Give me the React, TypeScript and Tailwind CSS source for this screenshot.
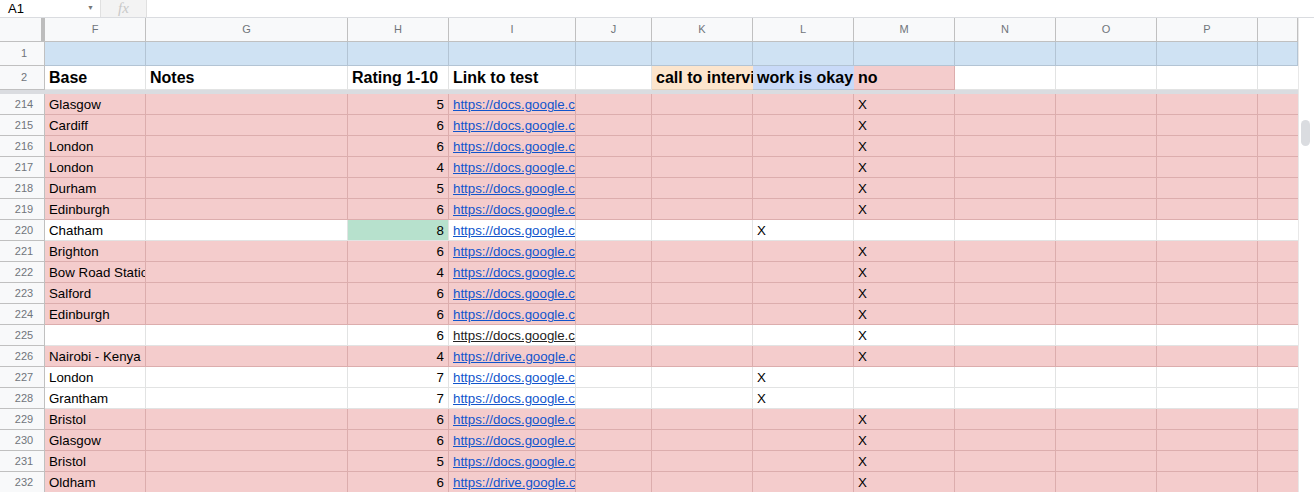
import * as React from "react";

type Row = {
  n: number;
  base: string;
  rating: number;
  link: "docs" | "drive";
  mark: "L" | "M";
  pink: boolean;
  green?: boolean;
  darkLink?: boolean;
};

const rows: Row[] = [
  { n: 214, base: "Glasgow", rating: 5, link: "docs", mark: "M", pink: true },
  { n: 215, base: "Cardiff", rating: 6, link: "docs", mark: "M", pink: true },
  { n: 216, base: "London", rating: 6, link: "docs", mark: "M", pink: true },
  { n: 217, base: "London", rating: 4, link: "docs", mark: "M", pink: true },
  { n: 218, base: "Durham", rating: 5, link: "docs", mark: "M", pink: true },
  { n: 219, base: "Edinburgh", rating: 6, link: "docs", mark: "M", pink: true },
  { n: 220, base: "Chatham", rating: 8, link: "docs", mark: "L", pink: false, green: true },
  { n: 221, base: "Brighton", rating: 6, link: "docs", mark: "M", pink: true },
  { n: 222, base: "Bow Road Station", rating: 4, link: "docs", mark: "M", pink: true },
  { n: 223, base: "Salford", rating: 6, link: "docs", mark: "M", pink: true },
  { n: 224, base: "Edinburgh", rating: 6, link: "docs", mark: "M", pink: true },
  { n: 225, base: "", rating: 6, link: "docs", mark: "M", pink: false, darkLink: true },
  { n: 226, base: "Nairobi - Kenya", rating: 4, link: "drive", mark: "M", pink: true },
  { n: 227, base: "London", rating: 7, link: "docs", mark: "L", pink: false },
  { n: 228, base: "Grantham", rating: 7, link: "docs", mark: "L", pink: false },
  { n: 229, base: "Bristol", rating: 6, link: "docs", mark: "M", pink: true },
  { n: 230, base: "Glasgow", rating: 6, link: "docs", mark: "M", pink: true },
  { n: 231, base: "Bristol", rating: 5, link: "docs", mark: "M", pink: true },
  { n: 232, base: "Oldham", rating: 6, link: "drive", mark: "M", pink: true },
];

const cols = [
  { key: "F", w: "w-[101px]" },
  { key: "G", w: "w-[202px]" },
  { key: "H", w: "w-[101px]" },
  { key: "I", w: "w-[127px]" },
  { key: "J", w: "w-[76px]" },
  { key: "K", w: "w-[101px]" },
  { key: "L", w: "w-[101px]" },
  { key: "M", w: "w-[101px]" },
  { key: "N", w: "w-[101px]" },
  { key: "O", w: "w-[101px]" },
  { key: "P", w: "w-[101px]" },
  { key: "", w: "w-[40px]" },
];

function RowHead({ children, h }: { children?: React.ReactNode; h: string }) {
  return (
    <div
      className={`${h} w-[45px] shrink-0 flex items-center justify-center pl-[4px] border-r border-b border-[#c0c0c0] bg-[#f8f9fa] text-[11px] text-[#70757a]`}
    >
      {children}
    </div>
  );
}

function DataRow({ r }: { r: Row }) {
  const bg = r.pink ? "bg-[#f4cccc]" : "bg-white";
  const line = r.pink ? "border-[#dcadad]" : "border-[#e2e3e3]";
  const cell = `h-[21px] shrink-0 border-r border-b ${line} overflow-hidden whitespace-nowrap flex items-end pb-[1px] leading-[16px]`;
  return (
    <div className="flex">
      <RowHead h="h-[21px]">{r.n}</RowHead>
      <div className={`${cell} ${bg} w-[101px] pl-[4px]`}>{r.base}</div>
      <div className={`${cell} ${bg} w-[202px]`} />
      <div
        className={`${cell} ${r.green ? "bg-[#b7e1cd]" : bg} w-[101px] justify-end pr-[4px]`}
      >
        {r.rating}
      </div>
      <div className={`${cell} ${bg} w-[127px] pl-[4px]`}>
        <span className={`underline ${r.darkLink ? "text-[#222]" : "text-[#1155cc]"}`}>
          {`https://${r.link}.google.com/forms`}
        </span>
      </div>
      <div className={`${cell} ${bg} w-[76px]`} />
      <div className={`${cell} ${bg} w-[101px]`} />
      <div className={`${cell} ${bg} w-[101px] pl-[4px]`}>{r.mark === "L" ? "X" : ""}</div>
      <div className={`${cell} ${bg} w-[101px] pl-[4px]`}>{r.mark === "M" ? "X" : ""}</div>
      <div className={`${cell} ${bg} w-[101px]`} />
      <div className={`${cell} ${bg} w-[101px]`} />
      <div className={`${cell} ${bg} w-[101px]`} />
      <div className={`${cell} ${bg} w-[40px] border-r-0`} />
    </div>
  );
}

export default function App() {
  const head = "h-[24px] shrink-0 border-r border-b overflow-hidden whitespace-nowrap flex items-end pb-[1px] pl-[4px] text-[16px] font-bold leading-[20px]";
  return (
    <div className="w-[1314px] h-[492px] overflow-hidden bg-white text-black [font-family:'Liberation_Sans',Arial,sans-serif] text-[13.3px]">
      {/* formula bar */}
      <div className="flex h-[18px] border-b border-[#dadce0]">
        <div className="w-[101px] flex items-center justify-between pl-[8px] pr-[6px] border-r border-[#e0e0e0]">
          <span className="text-[13px] leading-none">A1</span>
          <span className="text-[7px] text-[#777]">▼</span>
        </div>
        <div className="w-[46px] bg-[#f3f3f3] flex items-center justify-center border-r border-[#e0e0e0]">
          <span className="[font-family:'Liberation_Serif',serif] italic text-[15px] text-[#c8c8c8] leading-none">fx</span>
        </div>
        <div className="flex-1" />
      </div>

      <div className="flex">
        <div className="w-[1298px] shrink-0">
          {/* column headers */}
          <div className="flex h-[24px]">
            <div className="w-[45px] h-[24px] shrink-0 bg-[#f8f9fa] border-b border-[#c0c0c0] flex">
              <div className="flex-1" />
              <div className="w-[4px] bg-[#bdbdbd]" />
            </div>
            {cols.map((c, i) => (
              <div
                key={i}
                className={`${c.w} h-[24px] shrink-0 bg-[#f8f9fa] border-r border-b border-[#c0c0c0] flex items-center justify-center text-[11px] text-[#70757a]`}
              >
                {c.key}
              </div>
            ))}
          </div>

          {/* row 1 */}
          <div className="flex">
            <RowHead h="h-[24px]">1</RowHead>
            {cols.map((c, i) => (
              <div
                key={i}
                className={`${c.w} h-[24px] shrink-0 bg-[#cfe2f3] border-r border-b border-[#b3c4d4]`}
              />
            ))}
          </div>

          {/* row 2 */}
          <div className="flex">
            <RowHead h="h-[24px]">2</RowHead>
            <div className={`${head} w-[101px] border-[#e2e3e3]`}>Base</div>
            <div className={`${head} w-[202px] border-[#e2e3e3]`}>Notes</div>
            <div className={`${head} w-[101px] border-[#e2e3e3]`}>Rating 1-10</div>
            <div className={`${head} w-[127px] border-[#e2e3e3]`}>Link to test</div>
            <div className={`${head} w-[76px] border-[#e2e3e3]`} />
            <div className={`${head} w-[101px] bg-[#fce5cd] border-[#e6d0b8] border-r-0`}>call to interview</div>
            <div className={`${head} w-[101px] bg-[#c9daf8] border-[#b3c4d4] border-r-0`}>work is okay</div>
            <div className={`${head} w-[101px] bg-[#f4cccc] border-[#dcadad]`}>no</div>
            <div className={`${head} w-[101px] border-[#e2e3e3]`} />
            <div className={`${head} w-[101px] border-[#e2e3e3]`} />
            <div className={`${head} w-[101px] border-[#e2e3e3]`} />
            <div className={`${head} w-[40px] border-[#e2e3e3] border-r-0`} />
          </div>

          {/* frozen separator */}
          <div className="h-[4px] bg-[#dadce0]" />

          {rows.map((r) => (
            <DataRow key={r.n} r={r} />
          ))}
        </div>

        {/* vertical scrollbar */}
        <div className="w-[16px] shrink-0 h-[474px] bg-white border-l border-[#e8e8e8] pt-[102px] pl-[2px]">
          <div className="w-[9px] h-[26px] rounded-full bg-[#dadce0]" />
        </div>
      </div>
    </div>
  );
}
